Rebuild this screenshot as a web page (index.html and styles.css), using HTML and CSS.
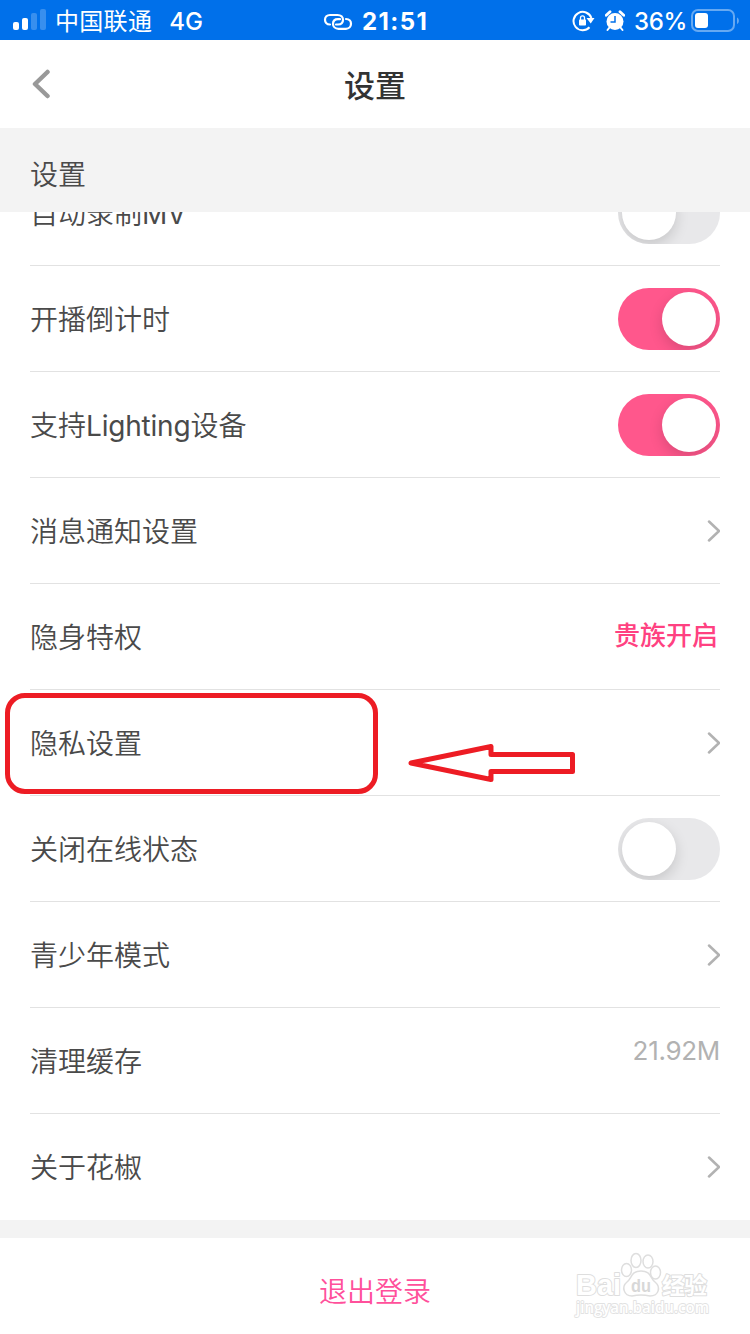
FILE: index.html
```html
<!DOCTYPE html>
<html lang="zh-CN">
  <head>
    <meta charset="UTF-8" />
    <meta name="viewport" content="width=device-width, initial-scale=1.0" />
    <title>设置</title>
    <link rel="stylesheet" href="styles.css">
  </head>
  <body>
    <div class="status-bar">
      <div class="status-left">
        <svg class="signal" width="33" height="22" viewBox="0 0 33 22" fill="#fff">
          <rect x="0" y="13" width="6" height="8" rx="2" />
          <rect x="9" y="9" width="6" height="12" rx="2" />
          <rect x="18" y="4" width="6" height="17" rx="2" opacity="0.22" />
          <rect x="27" y="0" width="6" height="21" rx="2" opacity="0.22" />
        </svg>
        <span class="carrier">中国联通</span>
        <span class="network">4G</span>
      </div>
      <div class="status-center">
        <svg class="link" width="30" height="18" viewBox="0 0 30 18">
          <path d="M7 11.5C3.5 11.5 2 9 2 6.8C2 4 4 2 7 2H14.5C18 2 20 4.2 20 6.8C20 9.6 18 11.5 15 11.5H13" />
          <path d="M23 6C26.5 6 28 8.5 28 10.8C28 13.5 26 15.8 23 15.8H15.5C12 15.8 10 13.5 10 10.9C10 8 12 6.2 15 6.2H17" />
        </svg>
        <span class="time">21:51</span>
      </div>
      <div class="status-right">
        <svg class="rotation-lock" width="23" height="22" viewBox="0 0 23 22" fill="none" stroke="#fff" stroke-width="2">
          <path d="M17.5 17.3A9.2 9.2 0 1 1 19.4 8" />
          <path d="M14.5 8H22.5L18.7 13.5Z" fill="#fff" stroke="none" />
          <rect x="7" y="9.5" width="7" height="6" rx="0.8" fill="#fff" stroke="none" />
          <path d="M8.5 10V7.8A2 2 0 0 1 12.5 7.8V10" stroke-width="1.3" />
        </svg>
        <svg class="alarm" width="20" height="22" viewBox="0 0 20 22">
          <circle cx="10" cy="11.5" r="8.5" fill="#fff" />
          <path d="M1.2 5.2L5 1.8M18.8 5.2L15 1.8" stroke="#fff" stroke-width="2.8" stroke-linecap="round" />
          <path d="M4.5 17.5L2.5 20M15.5 17.5L17.5 20" stroke="#fff" stroke-width="2" stroke-linecap="round" />
          <path d="M10 6V12H5.5" fill="none" stroke="#0070ea" stroke-width="1.5" />
        </svg>
        <span class="percent">36%</span>
        <svg class="battery" width="49" height="24" viewBox="0 0 49 24">
          <rect x="1" y="1" width="42" height="21" rx="6" fill="none" stroke="#fff" stroke-width="2" opacity="0.4" />
          <rect x="4" y="4" width="13" height="15" rx="3" fill="#fff" />
          <path d="M46 8.5C48.5 9.5 48.5 14 46 15Z" fill="#fff" opacity="0.4" />
        </svg>
      </div>
    </div>

    <header class="navbar">
      <svg class="back" width="20" height="30" viewBox="0 0 20 30">
        <path d="M16.5 3L4 15L16.5 27" />
      </svg>
      <h1>设置</h1>
    </header>

    <h2 class="section-title">设置</h2>

    <main class="settings">
      <div class="row">
        <span class="label">自动录制<span class="latin">MV</span></span>
        <span class="switch"></span>
      </div>
      <div class="row">
        <span class="label">开播倒计时</span>
        <span class="switch on"></span>
      </div>
      <div class="row">
        <span class="label">支持<span class="latin">Lighting</span>设备</span>
        <span class="switch on"></span>
      </div>
      <div class="row">
        <span class="label">消息通知设置</span>
        <svg class="chevron" width="13" height="24" viewBox="0 0 13 24"><path d="M2 2.5L12 12L2 21.5" /></svg>
      </div>
      <div class="row">
        <span class="label">隐身特权</span>
        <span class="vip">贵族开启</span>
      </div>
      <div class="row marked">
        <span class="label">隐私设置</span>
        <svg class="chevron" width="13" height="24" viewBox="0 0 13 24"><path d="M2 2.5L12 12L2 21.5" /></svg>
        <div class="highlight"></div>
        <svg class="arrow" width="170" height="40" viewBox="0 0 170 40">
          <path d="M4 20L84 3.5V11.5H165.5V28.5H84V36.5Z" />
        </svg>
      </div>
      <div class="row">
        <span class="label">关闭在线状态</span>
        <span class="switch"></span>
      </div>
      <div class="row">
        <span class="label">青少年模式</span>
        <svg class="chevron" width="13" height="24" viewBox="0 0 13 24"><path d="M2 2.5L12 12L2 21.5" /></svg>
      </div>
      <div class="row">
        <span class="label">清理缓存</span>
        <span class="cache-size">21.92M</span>
      </div>
      <div class="row">
        <span class="label">关于花椒</span>
        <svg class="chevron" width="13" height="24" viewBox="0 0 13 24"><path d="M2 2.5L12 12L2 21.5" /></svg>
      </div>
    </main>

    <footer class="footer">
      <button type="button" class="logout">退出登录</button>
    </footer>

    <svg class="watermark" width="150" height="76" viewBox="0 0 150 76">
      <g class="brand">
        <text x="6" y="51" font-size="30" textLength="45" lengthAdjust="spacingAndGlyphs">Bai</text>
        <path d="M71 27C61 27 62 34 57 38C51 43 54 52 62 52C67 51 75 51 80 52C89 52 91 43 85 38C80 34 81 27 71 27Z" />
        <ellipse cx="56.5" cy="26" rx="5" ry="6.5" />
        <ellipse cx="66" cy="16.5" rx="5" ry="7" />
        <ellipse cx="78" cy="17.5" rx="5" ry="6.5" />
        <ellipse cx="85.500" cy="28.500" rx="5" ry="6.500" />
        <text class="du" x="61" y="48" font-size="18" textLength="20" lengthAdjust="spacingAndGlyphs">du</text>
        <text x="92" y="50" font-size="23" textLength="45">经验</text>
      </g>
      <text class="site" x="6" y="69" font-size="15.5" textLength="133" lengthAdjust="spacingAndGlyphs">jingyan.baidu.com</text>
    </svg>
  </body>
</html>
```
FILE: styles.css
```css
* {
  box-sizing: border-box;
}

body {
  position: relative;
  width: 750px;
  height: 1334px;
  margin: 0;
  overflow: hidden;
  font-family: "Inter", "Noto Sans CJK SC", sans-serif;
  font-size: 28px;
  color: #4a4a4a;
  background-color: #ffffff;
}

svg {
  display: block;
  flex-shrink: 0;
}

/* status bar */
.status-bar {
  display: grid;
  grid-template-columns: 323px 249px 178px;
  height: 40px;
  background-color: #0070ea;
  color: #ffffff;
  font-size: 24px;
  line-height: 38px;
  white-space: nowrap;
}

.status-bar span {
  padding-top: 3px;
}

.status-left,
.status-center,
.status-right {
  display: flex;
  align-items: center;
}

.status-left {
  padding-left: 13px;
}

.signal {
  margin-bottom: 1px;
}

.carrier {
  margin-left: 9px;
  letter-spacing: 0.3px;
}

.network {
  margin-left: 17px;
  font-weight: 500;
}

.link {
  margin-top: 2px;
}

.link path {
  fill: none;
  stroke: #ffffff;
  stroke-width: 2.2;
  stroke-linecap: round;
}

.time {
  margin-left: 9px;
  font-weight: 700;
  letter-spacing: 1.4px;
}

.alarm {
  margin-left: 10px;
}

.percent {
  margin-left: 9px;
  font-weight: 500;
  letter-spacing: -0.3px;
}

.battery {
  margin-left: 4px;
}

/* title */
.navbar {
  display: grid;
  grid-template-columns: 60px 1fr 60px;
  align-items: center;
  height: 88px;
}

.back {
  justify-self: end;
  margin-right: 9px;
}

.back path {
  fill: none;
  stroke: #999999;
  stroke-width: 4.5;
  stroke-linecap: round;
  stroke-linejoin: round;
}

h1 {
  margin: 0;
  padding-top: 3px;
  text-align: center;
  font-size: 31px;
  font-weight: 500;
  line-height: 85px;
  color: #333333;
}

.section-title {
  height: 84px;
  margin: 0;
  padding: 5px 30px 0;
  font-size: 28px;
  font-weight: 350;
  line-height: 84px;
  background-color: #f3f3f3;
}

/* list */
.settings {
  height: 1008px;
  padding: 0 30px;
  overflow: hidden;
}

.row {
  display: flex;
  justify-content: space-between;
  align-items: center;
  height: 106px;
  border-bottom: 1px solid #e2e2e2;
  line-height: 40px;
}

.row:first-child {
  margin-top: -52px;
}

.row:last-child {
  border-bottom-color: transparent;
}

.label {
  padding-top: 3px;
  font-weight: 350;
}

.latin {
  font-weight: 400;
  letter-spacing: -0.2px;
}

.switch {
  width: 102px;
  height: 62px;
  padding: 4px;
  border-radius: 31px;
  background-color: #e8e8ea;
  overflow: hidden;
}

.switch::before {
  content: "";
  display: block;
  width: 54px;
  height: 54px;
  border-radius: 50%;
  background-color: #ffffff;
  box-shadow: 0 5px 14px rgba(0, 0, 0, 0.15);
}

.switch.on {
  background-color: #ff578c;
}

.switch.on::before {
  margin-left: 40px;
}

.chevron path {
  fill: none;
  stroke: #b2b2b2;
  stroke-width: 2.5;
  stroke-linecap: round;
  stroke-linejoin: round;
}

.vip {
  padding: 0 2px 1px 0;
  font-size: 26px;
  font-weight: 500;
  color: #ff4181;
}

.cache-size {
  padding-bottom: 20px;
  font-size: 26px;
  letter-spacing: -0.3px;
  color: #b2b2b2;
}

/* red marks over the privacy row */
.marked {
  position: relative;
}

.highlight {
  position: absolute;
  top: 3px;
  left: -25px;
  width: 373px;
  height: 101px;
  border: 5px solid #ed1c24;
  border-radius: 20px;
}

.arrow {
  position: absolute;
  top: 53px;
  left: 377px;
}

.arrow path {
  fill: none;
  stroke: #ed1c24;
  stroke-width: 5;
  stroke-linejoin: round;
}

/* footer */
.footer {
  height: 114px;
  border-top: 18px solid #f3f3f3;
  text-align: center;
}

.logout {
  padding: 0;
  border: none;
  background: none;
  font-family: inherit;
  font-size: 28px;
  font-weight: 350;
  line-height: 109px;
  color: #ff509b;
}

.watermark {
  position: absolute;
  top: 1244px;
  left: 570px;
  fill: #ffffff;
  stroke: #dedede;
  stroke-width: 2;
  stroke-linejoin: round;
  font-family: "Liberation Sans", "Noto Sans CJK SC", sans-serif;
}

.watermark text {
  paint-order: stroke;
}

.watermark path,
.watermark ellipse {
  stroke-width: 1.5;
}

.brand {
  font-weight: 700;
}

.watermark .du {
  fill: #d8d8d8;
  stroke: none;
}

.site {
  font-family: "Open Sans", sans-serif;
  font-weight: 600;
  stroke: #e2e2e2;
  stroke-width: 1.8;
}
```
